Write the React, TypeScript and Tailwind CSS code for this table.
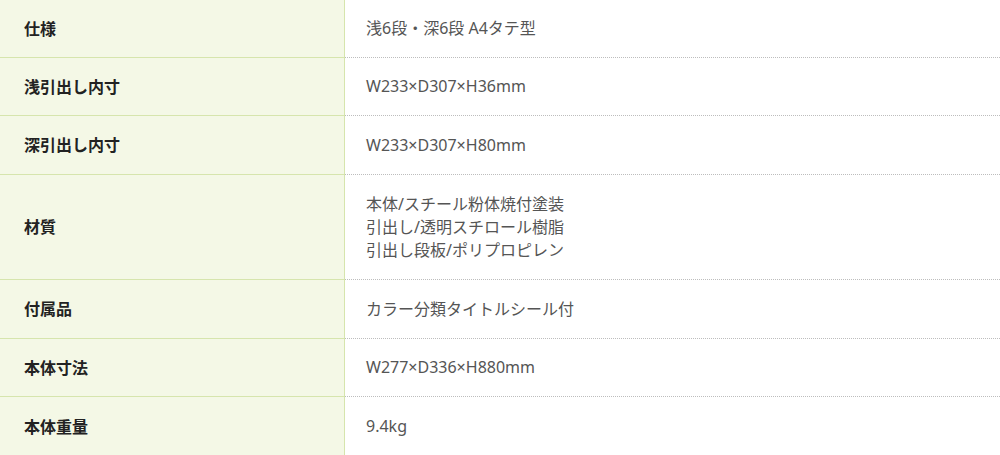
import React from "react";

const rows: { label: string; value: string[]; h: string }[] = [
  { label: "仕様", value: ["浅6段・深6段 A4タテ型"], h: "h-[58px]" },
  { label: "浅引出し内寸", value: ["W233×D307×H36mm"], h: "h-[58px]" },
  { label: "深引出し内寸", value: ["W233×D307×H80mm"], h: "h-[59px]" },
  {
    label: "材質",
    value: ["本体/スチール粉体焼付塗装", "引出し/透明スチロール樹脂", "引出し段板/ポリプロピレン"],
    h: "h-[105px]",
  },
  { label: "付属品", value: ["カラー分類タイトルシール付"], h: "h-[59px]" },
  { label: "本体寸法", value: ["W277×D336×H880mm"], h: "h-[58px]" },
  { label: "本体重量", value: ["9.4kg"], h: "h-[59px]" },
];

export default function App() {
  return (
    <div
      className="w-[1000px] h-[455px] overflow-hidden bg-white"
      style={{ fontFamily: '"Noto Sans", "Noto Sans CJK JP", sans-serif' }}
    >
      {rows.map((r, i) => {
        const last = i === rows.length - 1;
        return (
          <div key={i} className="flex">
            <div
              className={`w-[345px] shrink-0 bg-[#f4f8e6] border-r border-[#d6e5ad] flex items-center pl-[24px] text-[16px] font-bold text-[#222] ${r.h} ${
                last ? "" : "border-b border-b-[#d6e5ad]"
              }`}
            >
              {r.label}
            </div>
            <div
              className={`flex-1 flex flex-col justify-center pl-[21px] text-[16px] leading-[23px] text-[#555] ${r.h} ${
                last ? "" : "border-b border-dotted border-b-[#bdbdbd]"
              }`}
            >
              {r.value.map((v, j) => (
                <div key={j}>{v}</div>
              ))}
            </div>
          </div>
        );
      })}
    </div>
  );
}
